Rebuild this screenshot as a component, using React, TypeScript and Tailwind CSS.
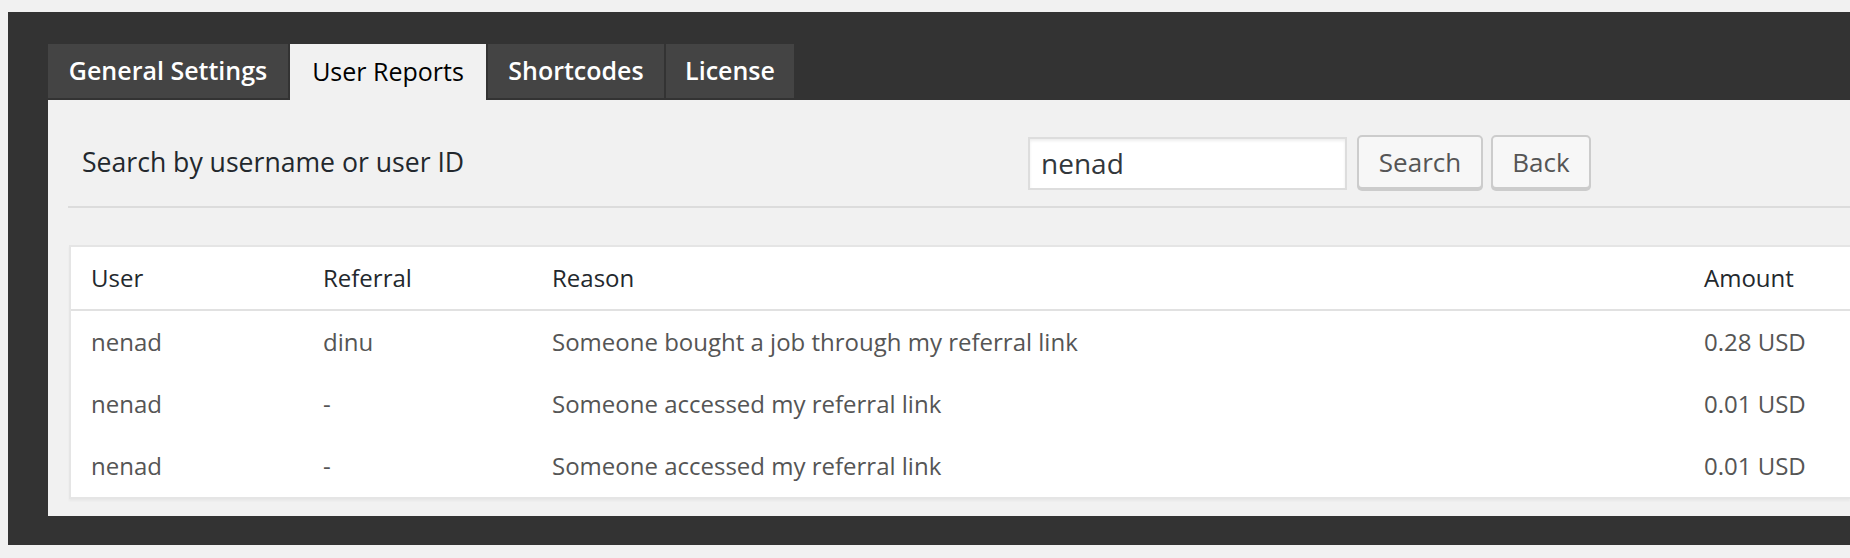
import * as React from "react";

const tabs = [
  { label: "General Settings", width: "w-[240px]", active: false },
  { label: "User Reports", width: "w-[196px]", active: true },
  { label: "Shortcodes", width: "w-[176px]", active: false },
  { label: "License", width: "w-[128px]", active: false },
];

const rows = [
  { user: "nenad", referral: "dinu", reason: "Someone bought a job through my referral link", amount: "0.28 USD" },
  { user: "nenad", referral: "-", reason: "Someone accessed my referral link", amount: "0.01 USD" },
  { user: "nenad", referral: "-", reason: "Someone accessed my referral link", amount: "0.01 USD" },
];

export default function App() {
  const [query, setQuery] = React.useState("nenad");

  return (
    <div className="w-[1850px] h-[558px] overflow-hidden bg-[#f1f1f1] pt-[12px] pl-[8px] font-['Open_Sans',sans-serif]">
      <div className="h-[533px] bg-[#333333] pl-[40px] pt-[32px]">
        {/* Tabs */}
        <div className="flex items-start gap-[2px] h-[56px]">
          {tabs.map(tab => (
            <div
              key={tab.label}
              className={
                tab.active
                  ? `${tab.width} h-[56px] bg-[#f1f1f1] text-black flex items-center justify-center text-[25px]`
                  : `${tab.width} h-[54px] bg-[#444444] text-white flex items-center justify-center text-[25px] font-semibold`
              }
            >
              {tab.label}
            </div>
          ))}
        </div>

        {/* Panel */}
        <div className="h-[416px] bg-[#f1f1f1] pl-[20px] pt-[35px]">
          <div className="flex items-center h-[56px]">
            <label className="w-[960px] pl-[14px] text-[26.6px] text-[#23282d]">
              Search by username or user ID
            </label>
            <input
              value={query}
              onChange={e => setQuery(e.target.value)}
              className="w-[319px] h-[53px] bg-white border-2 border-[#dddddd] shadow-[inset_0_2px_3px_rgba(0,0,0,0.07)] pl-[11px] text-[28px] text-[#32373c] outline-none"
            />
            <button className="ml-[10px] w-[126px] h-[54px] mb-[2px] rounded-[5px] border-2 border-[#cccccc] bg-[#f7f7f7] shadow-[0_2px_0_#cccccc] text-[26px] text-[#555555]">
              Search
            </button>
            <button className="ml-[8px] w-[100px] h-[54px] mb-[2px] rounded-[5px] border-2 border-[#cccccc] bg-[#f7f7f7] shadow-[0_2px_0_#cccccc] text-[26px] text-[#555555]">
              Back
            </button>
          </div>

          <div className="mt-[15px] h-[2px] bg-[#dcdcdc]" />

          {/* Reports table */}
          <div className="mt-[37px] ml-px bg-white border-y-2 border-l-2 border-[#e5e5e5] shadow-[0_2px_2px_rgba(0,0,0,0.04)] text-[24px]">
            <div className="grid grid-cols-[232px_229px_1fr_166px] h-[64px] items-center border-b-2 border-[#e1e1e1] text-[#23282d]">
              <div className="px-5">User</div>
              <div className="px-5">Referral</div>
              <div className="px-5">Reason</div>
              <div className="px-5">Amount</div>
            </div>
            {rows.map((row, i) => (
              <div key={i} className="grid grid-cols-[232px_229px_1fr_166px] h-[62px] items-center text-[#555555]">
                <div className="px-5">{row.user}</div>
                <div className="px-5">{row.referral}</div>
                <div className="px-5">{row.reason}</div>
                <div className="px-5 whitespace-nowrap">{row.amount}</div>
              </div>
            ))}
          </div>
        </div>
      </div>
    </div>
  );
}
